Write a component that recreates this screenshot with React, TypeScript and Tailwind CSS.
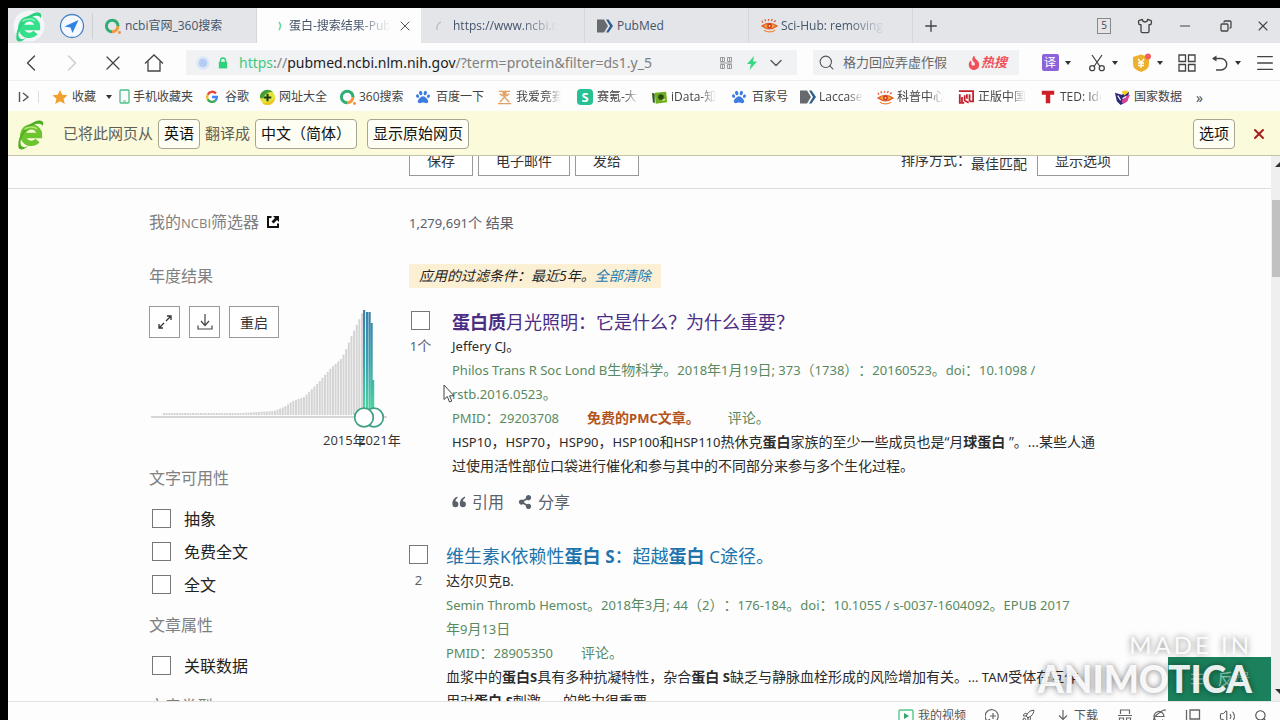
import type { ReactNode } from 'react';
import {
  ChevronDown,
  ChevronLeft,
  ChevronRight,
  Copy,
  Menu,
  Minus,
  Plus,
  Rocket,
  Search,
  Shirt,
  Volume2,
  X,
} from 'lucide-react';
import { FaFire, FaPaw, FaShareAlt } from 'react-icons/fa';

function BrowserLogo({ bright }: { bright?: boolean }) {
  const main = bright ? '#35e08c' : '#6cc42f';
  const dark = bright ? '#2bcf7d' : '#4fae22';
  return (
    <svg viewBox="0 0 32 32" className="size-8" aria-hidden="true">
      {bright && <circle cx="16" cy="16" r="15.500" fill="#f4f6f8" />}
      <path d="M8.500 17.500H24.500A8.300 8.300 0 1 0 22.500 22.500" fill="none" stroke={main} strokeWidth="5.400" />
      <path d="M3.500 29.500C2 20 9 8.500 19 4C26 1 30 3 27.500 8.500C27.500 5 23 5 18.500 7C10 11 5 20 5.500 25.500C6 29.500 10 30 13 28C9 32 4.500 32.500 3.500 29.500Z" fill={dark} />
      <path d="M9.500 11.500C12.500 8.500 19 8 22 11" fill="none" stroke={bright ? '#8af5bd' : '#b4ea78'} strokeWidth="1.600" />
    </svg>
  );
}

function SearchRing() {
  return (
    <svg viewBox="0 0 18 18" className="size-[18px]" aria-hidden="true">
      <path d="M14 9A5.800 5.800 0 1 0 8 14.800" fill="none" stroke="#2fae74" strokeWidth="3" />
      <path d="M8 14.800A5.800 5.800 0 0 0 14 9" fill="none" stroke="#f39a3c" strokeWidth="3" />
      <circle cx="15.500" cy="15.500" r="1.400" fill="#f08a3c" />
    </svg>
  );
}

function PubMedIcon() {
  return (
    <svg viewBox="0 0 18 18" className="size-[18px]" aria-hidden="true">
      <path d="M1 2.500H8L12 9L8 15.500H1Z" fill="#66696e" />
      <path d="M10 2.500H12.500L17 9L12.500 15.500H10L14 9Z" fill="#2e5f8f" />
    </svg>
  );
}

function EyeIcon() {
  return (
    <svg viewBox="0 0 18 18" className="size-[17px]" aria-hidden="true">
      <path d="M1 9.500Q9 4 17 9.500Q9 15.500 1 9.500Z" fill="#f2a13b" stroke="#dd5a2a" strokeWidth="1.200" />
      <circle cx="9" cy="9.600" r="2.600" fill="#cf3b22" />
      <circle cx="9" cy="9.600" r="1" fill="#ffe08a" />
      <path d="M2 6L1 4M5 4.500L4 2.500M8 4V2M11 4.200L12 2.200M14 5.500L15.500 3.500" stroke="#e05a30" strokeWidth="1.300" />
      <path d="M3 14Q9 17.500 15 14" fill="none" stroke="#e88a34" strokeWidth="1.400" />
    </svg>
  );
}

function GoogleIcon() {
  return (
    <svg viewBox="0 0 18 18" className="size-3.5" aria-hidden="true" fill="none" strokeWidth="3">
      <path d="M14 4.500A6.300 6.300 0 0 0 3.500 6" stroke="#e24a3b" />
      <path d="M3.500 6A6.300 6.300 0 0 0 3.500 12" stroke="#f4b92f" />
      <path d="M3.500 12A6.300 6.300 0 0 0 13.300 13.600" stroke="#3aa757" />
      <path d="M13.300 13.600A6.300 6.300 0 0 0 15.300 9H9" stroke="#4285f4" />
    </svg>
  );
}

function PlusBall() {
  return (
    <svg viewBox="0 0 18 18" className="size-[17px]" aria-hidden="true">
      <circle cx="9" cy="9" r="8" fill="#e3e53a" />
      <path d="M1 9A8 8 0 0 1 15 3.500Q9 2 6 7T1 9Z" fill="#3f9f35" />
      <path d="M3 14.500Q12 16 17 9Q16 17 9 17Q5 17 3 14.500Z" fill="#f0c321" />
      <path d="M9 5V13M5 9H13" stroke="#1c3b1a" strokeWidth="2.200" />
    </svg>
  );
}

function HourglassIcon() {
  return (
    <svg viewBox="0 0 18 18" className="size-[17px]" aria-hidden="true" fill="none" stroke="#e0a068" strokeWidth="1.500">
      <path d="M3 2.500H15M2 15.500H16M4 5Q9 10 14 5M4 14L9 8.500L14 14" />
      <circle cx="9" cy="4.500" r="1.600" fill="#e0a068" />
    </svg>
  );
}

function SkIcon() {
  return (
    <span className="flex size-4 items-center justify-center rounded-sm bg-[#25c193] text-[13px] font-bold leading-none text-white">
      S
    </span>
  );
}

function DataBookIcon() {
  return (
    <svg viewBox="0 0 18 18" className="size-[17px]" aria-hidden="true">
      <path d="M1 4L4 5V15L2 14Z" fill="#2d5c14" />
      <path d="M4 4L16 3L17 14L5 15.500Z" fill="#6fae1f" />
      <circle cx="10.500" cy="8.500" r="3" fill="#2b4a12" />
      <path d="M12 12L15 11" stroke="#d5ec9a" strokeWidth="1.500" />
    </svg>
  );
}

function SealIcon() {
  return (
    <svg viewBox="0 0 18 18" className="size-4" aria-hidden="true" fill="none" stroke="#c4202b" strokeWidth="2">
      <path d="M1 2.500H17V15M2 6V15.500H7M4.500 9V15M7.500 7V13L12 15.500M10 6V11M13 6V14M13 14H16" />
    </svg>
  );
}

function TedIcon() {
  return (
    <svg viewBox="0 0 18 18" className="size-4" aria-hidden="true">
      <path d="M2 2H16V6.500H11.500V16H6.500V6.500H2Z" fill="#cf2027" />
    </svg>
  );
}

function StatsIcon() {
  return (
    <svg viewBox="0 0 18 18" className="size-[17px]" aria-hidden="true">
      <path d="M1 4L8 6L16 3L14 13L7 17L3 13Z" fill="#2b2a78" />
      <path d="M8 3Q12 0 16 3L11 7Z" fill="#f2d024" />
      <path d="M8 14Q9 7 17 6L14 13Q10 17 8 14Z" fill="#d8409a" />
      <path d="M4 7L7 12M9 10L13 8" stroke="#fff" strokeWidth="1.200" />
    </svg>
  );
}

function PhoneIcon() {
  return (
    <svg viewBox="0 0 12 16" className="h-4 w-3" aria-hidden="true">
      <rect x="1" y="1" width="9" height="13" rx="1" fill="none" stroke="#4cbf86" strokeWidth="1.300" />
      <path d="M4 12H7" stroke="#4cbf86" />
    </svg>
  );
}

function StarIcon() {
  return (
    <svg viewBox="0 0 18 18" className="size-4" aria-hidden="true">
      <path d="M9 1L11.500 6.500L17.500 7L13 11L14.400 17L9 13.800L3.600 17L5 11L.5 7L6.500 6.500Z" fill="#efa12a" />
    </svg>
  );
}

function Caret() {
  return (
    <svg viewBox="0 0 6 4" className="h-1 w-1.5 shrink-0" aria-hidden="true">
      <path d="M0 0H6L3 4Z" fill="#333" />
    </svg>
  );
}

/** Sets Latin runs one step smaller than the Chinese text around them. */
function Mixed({ text, large }: { text: string; large?: boolean }) {
  return (
    <>
      {text.split(/([\x21-\x7e][\x20-\x7e]*)/).map((part, i) =>
        i % 2 ? (
          <span key={i} className={`font-['Noto_Sans',sans-serif] ${large ? 'text-[17px]' : 'text-[13px]'}`}>
            {part}
          </span>
        ) : (
          part
        ),
      )}
    </>
  );
}

const paw = <FaPaw className="size-3.5 text-[#3c7ce0]" />;

const bookmarks: { icon: ReactNode; text: string; width: string; fade?: boolean; caret?: boolean }[] = [
  { icon: <StarIcon />, text: '收藏', width: 'w-[67px]', caret: true },
  { icon: <PhoneIcon />, text: '手机收藏夹', width: 'w-[86px] pr-2' },
  { icon: <GoogleIcon />, text: '谷歌', width: 'w-[54px] pr-2' },
  { icon: <PlusBall />, text: '网址大全', width: 'w-[80px] pr-2' },
  { icon: <SearchRing />, text: '360搜索', width: 'w-[77px] pr-2' },
  { icon: paw, text: '百度一下', width: 'w-[80px] pr-2' },
  { icon: <HourglassIcon />, text: '我爱竞赛', width: 'w-[81px] pr-4', fade: true },
  { icon: <SkIcon />, text: '赛氪-大学', width: 'w-[74px] pr-3', fade: true },
  { icon: <DataBookIcon />, text: 'iData-知识', width: 'w-[81px] pr-4', fade: true },
  { icon: paw, text: '百家号', width: 'w-[67px] pr-2' },
  { icon: <PubMedIcon />, text: 'Laccase', width: 'w-[78px] pr-3', fade: true },
  { icon: <EyeIcon />, text: '科普中心', width: 'w-[81px] pr-3.5', fade: true },
  { icon: <SealIcon />, text: '正版中国', width: 'w-[82px] pr-3.5', fade: true },
  { icon: <TedIcon />, text: 'TED: Ideas', width: 'w-[74px] pr-3', fade: true },
  { icon: <StatsIcon />, text: '国家数据', width: 'w-[82px] pr-2' },
];

const FADE = '[mask-image:linear-gradient(to_right,#000_65%,transparent)]';

function Tab({ icon, text, active, fade }: { icon: ReactNode; text: string; active?: boolean; fade?: boolean }) {
  return (
    <div
      className={`flex w-[164px] shrink-0 items-center self-stretch pl-2.5 pr-2 ${active ? 'bg-[#fdfdfd]' : 'border-r border-[#d5d7db]'}`}
    >
      <span className="mr-0.5 flex w-5 shrink-0 items-center justify-center">{icon}</span>
      <a
        href="#tab"
        className={`overflow-hidden whitespace-nowrap text-[12px] text-[#44546a] ${active ? 'w-[102px]' : 'max-w-[104px]'} ${fade ? FADE : ''}`}
      >
        {text}
      </a>
      {active && (
        <button type="button" aria-label="关闭标签" className="ml-auto">
          <X className="size-4 text-[#555]" strokeWidth={1.5} />
        </button>
      )}
    </div>
  );
}

function IconButton({ label, width, children }: { label: string; width: string; children: ReactNode }) {
  return (
    <button type="button" aria-label={label} className={`flex shrink-0 items-center justify-center gap-1.5 text-[#444] ${width}`}>
      {children}
    </button>
  );
}

function TabBar() {
  return (
    <header className="flex h-[35px] shrink-0 items-center bg-[#e3e5e9]">
      <span className="flex w-[42px] justify-center">
        <BrowserLogo bright />
      </span>
      <span className="flex w-[43px] justify-end border-r border-[#cdd0d5] pr-[7px]">
        <svg viewBox="0 0 26 26" className="size-[26px]" aria-hidden="true">
          <circle cx="13" cy="13" r="11.500" fill="#f5f9fe" stroke="#4a84c8" strokeWidth="1.300" />
          <path d="M19.500 7L5.500 13.500L11.500 14.500L13.500 20Z" fill="#2d84e3" />
        </svg>
      </span>
      <Tab icon={<SearchRing />} text="ncbi官网_360搜索" />
      <Tab
        active
        fade
        icon={
          <svg viewBox="0 0 16 16" className="size-4" aria-hidden="true">
            <path d="M10 4Q13 8 10 12" fill="none" stroke="#5fdc9a" strokeWidth="1.500" />
          </svg>
        }
        text="蛋白-搜索结果-PubMed"
      />
      <Tab
        fade
        icon={
          <svg viewBox="0 0 16 16" className="size-4" aria-hidden="true">
            <path d="M4 12Q3 6 8 4" fill="none" stroke="#b9bcc2" strokeWidth="1.300" />
          </svg>
        }
        text="https://www.ncbi.nlm"
      />
      <Tab icon={<PubMedIcon />} text="PubMed" />
      <Tab fade icon={<EyeIcon />} text="Sci-Hub: removing barriers" />
      <IconButton label="新建标签" width="w-9">
        <Plus className="size-[18px]" strokeWidth={1.8} />
      </IconButton>
      <div className="ml-auto flex items-center">
        <IconButton label="标签数" width="w-[40px]">
          <span className="flex h-4 w-3.5 items-center justify-center border border-[#888] text-[10px]">5</span>
        </IconButton>
        <IconButton label="皮肤" width="w-[41px]">
          <Shirt className="size-4" strokeWidth={2} />
        </IconButton>
        <IconButton label="最小化" width="w-[40px]">
          <Minus className="size-4" strokeWidth={1.5} />
        </IconButton>
        <IconButton label="还原" width="w-[41px]">
          <Copy className="size-3 rotate-90" strokeWidth={2.6} />
        </IconButton>
        <IconButton label="关闭" width="w-[34px]">
          <X className="size-4" strokeWidth={1.6} />
        </IconButton>
      </div>
    </header>
  );
}

function Toolbar() {
  return (
    <nav className="flex h-[38px] shrink-0 items-center border-b border-[#efefef] bg-[#fdfdfd] pt-0.5">
      <div className="flex w-[178px] pl-[3px]">
        <IconButton label="后退" width="w-[40px]">
          <ChevronLeft className="size-7" strokeWidth={1.2} />
        </IconButton>
        <IconButton label="前进" width="w-[42px]">
          <ChevronRight className="size-7 text-[#ccc]" strokeWidth={1.2} />
        </IconButton>
        <IconButton label="停止" width="w-[40px]">
          <X className="size-6" strokeWidth={1.3} />
        </IconButton>
        <IconButton label="主页" width="w-[42px]">
          <svg viewBox="0 0 20 20" className="size-5" aria-hidden="true">
            <path d="M1 10.500L10 2L19 10.500M4 8.500V18H16V8.500" fill="none" stroke="currentColor" strokeWidth="1.300" />
          </svg>
        </IconButton>
      </div>
      <div className="flex h-[25px] flex-1 items-center bg-[#f0f2f3] pl-2.5">
        <svg viewBox="0 0 14 14" className="size-3.5" aria-hidden="true">
          <circle cx="7" cy="7" r="5.500" fill="#b4cdf3" stroke="#dbe6f8" strokeWidth="2.500" />
        </svg>
        <svg viewBox="0 0 12 14" className="ml-2 h-3 w-2.5" aria-hidden="true">
          <path d="M3 6V4A3 3 0 0 1 9 4V6" fill="none" stroke="#2fd17c" strokeWidth="1.600" />
          <rect x="1" y="5.500" width="10" height="8" fill="#2fd17c" />
        </svg>
        <p className="ml-[11px] whitespace-nowrap font-['Noto_Sans',sans-serif] text-[14px] text-[#808080]">
          <span className="text-[#3ecb84]">https</span>://<span className="text-[#1d1d1d]">pubmed.ncbi.nlm.nih.gov</span>
          /?term=protein&amp;filter=ds1.y_5
        </p>
        <div className="ml-auto flex items-center pr-[11px]">
          <svg viewBox="0 0 12 12" className="size-3" aria-hidden="true" fill="none" stroke="#999">
            <path d="M.5 .5H4.500V4.500H.5ZM7.500 .5H11.500V4.500H7.500ZM.5 7.500H4.500V11.500H.5ZM7.500 7.500H11.500V11.500H7.500ZM0 6H12M2.500 1V4M9.500 1V4M2.500 8V11M9.500 8V11" />
          </svg>
          <svg viewBox="0 0 12 14" className="ml-3.5 h-3.5 w-3" aria-hidden="true">
            <path d="M8 0L1 8H5L3.500 14L11 5.500H7Z" fill="#35d983" />
          </svg>
          <ChevronDown className="ml-2 size-5 text-[#555]" strokeWidth={1.6} />
        </div>
      </div>
      <label className="ml-4 flex h-[25px] w-[206px] items-center bg-[#f0f2f3] pl-[5px]">
        <Search className="size-[17px] shrink-0 text-[#555]" strokeWidth={1.5} />
        <input
          aria-label="搜索"
          className="ml-2 w-[114px] bg-transparent text-[13px] text-[#666] outline-none placeholder:text-[#666]"
          placeholder="格力回应弄虚作假"
        />
        <FaFire className="ml-2.5 size-3.5 shrink-0 text-[#f0505a]" />
        <span className="whitespace-nowrap text-[13px] font-bold italic text-[#f0505a]">热搜</span>
      </label>
      <div className="ml-3 flex items-center">
        <IconButton label="翻译" width="w-[50px]">
          <span className="flex size-[17px] items-center justify-center rounded-xs bg-[#8b62d8] text-[12px] leading-none text-white">译</span>
          <Caret />
        </IconButton>
        <IconButton label="截图" width="w-[43px]">
          <svg viewBox="0 0 18 18" className="size-[18px]" aria-hidden="true" fill="none" stroke="currentColor" strokeWidth="1.300">
            <path d="M4 1L12 12.500M14 1L6 12.500" />
            <circle cx="4.200" cy="14.200" r="2.500" />
            <circle cx="13.800" cy="14.200" r="2.500" />
          </svg>
          <Caret />
        </IconButton>
        <IconButton label="钱包" width="w-[46px]">
          <svg viewBox="0 0 20 20" className="size-5" aria-hidden="true">
            <path d="M10 1.500L18 4V11Q18 16.500 10 19Q2 16.500 2 11V4Z" fill="#eeb02c" />
            <path d="M7 6L10 9.500L13 6M10 9.500V15M7 10H13M7 12.500H13" fill="none" stroke="#fff" strokeWidth="1.300" />
            <circle cx="17" cy="3.500" r="3" fill="#f06060" />
          </svg>
          <Caret />
        </IconButton>
        <IconButton label="应用" width="w-[33px]">
          <svg viewBox="0 0 18 18" className="size-[18px]" aria-hidden="true" fill="none" stroke="currentColor" strokeWidth="1.300">
            <path d="M1 1H7.500V7.500H1ZM10.500 1H17V7.500H10.500ZM1 10.500H7.500V17H1ZM10.500 10.500H17V17H10.500Z" />
          </svg>
        </IconButton>
        <IconButton label="撤销" width="w-[46px]">
          <svg viewBox="0 0 18 18" className="size-[18px]" aria-hidden="true">
            <path d="M2 4.500H10A5.500 5.500 0 0 1 10 16H5" fill="none" stroke="currentColor" strokeWidth="1.400" />
            <path d="M1 4.500L5.500 1.500V7.500Z" fill="currentColor" />
          </svg>
          <Caret />
        </IconButton>
        <IconButton label="菜单" width="w-[31px]">
          <Menu className="size-[22px]" strokeWidth={1.4} />
        </IconButton>
      </div>
    </nav>
  );
}

function BookmarkBar() {
  return (
    <nav className="flex h-[30px] shrink-0 items-center overflow-hidden bg-[#fdfdfd] pl-2.5 pt-0.5 text-[12px] text-[#444]">
      <svg viewBox="0 0 12 12" className="size-3 shrink-0" aria-hidden="true">
        <path d="M1.500 1V11M5 2L10 6L5 10" fill="none" stroke="#555" strokeWidth="1.400" />
      </svg>
      <span className="ml-2 mr-[13px] h-3 w-px shrink-0 bg-[#ddd]" />
      {bookmarks.map((b) => (
        <div key={b.text} className={`flex shrink-0 items-center ${b.width}`}>
          <span className={`flex shrink-0 items-center ${b.text === '手机收藏夹' ? 'w-3.5' : 'w-5'}`}>{b.icon}</span>
          <a href="#bookmark" className={`overflow-hidden whitespace-nowrap ${b.fade ? FADE : ''}`}>
            {b.text}
          </a>
          {b.caret && (
            <span className="ml-2.5">
              <Caret />
            </span>
          )}
        </div>
      ))}
      <span className="text-[14px]">»</span>
    </nav>
  );
}

function BarButton({ children }: { children: ReactNode }) {
  return (
    <button type="button" className="h-[30px] rounded-sm border border-[#a5a592] bg-[#fefef4] px-[5px] text-[15px] leading-none text-[#111]">
      {children}
    </button>
  );
}

function TranslateBar() {
  return (
    <section className="flex h-[45px] shrink-0 items-center border-b border-[#c4c1a9] bg-[#fbfadb] pl-[7px] pt-px text-[15px] text-[#5f5f58]">
      <BrowserLogo />
      <span className="ml-4 mr-[5px]">已将此网页从</span>
      <BarButton>英语</BarButton>
      <span className="mx-[5px]">翻译成</span>
      <BarButton>中文（简体）</BarButton>
      <span className="w-2.5" />
      <BarButton>显示原始网页</BarButton>
      <span className="ml-auto flex items-center">
        <BarButton>选项</BarButton>
        <button type="button" aria-label="关闭翻译栏" className="ml-4 mr-[13px] text-[#a51d1d]">
          <X className="size-4" strokeWidth={3} />
        </button>
      </span>
    </section>
  );
}

const profile: [number, number][] = [
  [14, 107], [92, 107], [124, 105], [134, 101], [143, 95], [154, 91], [168, 77],
  [181, 62], [191, 53], [195, 46], [201, 31], [209, 14], [213, 5],
];

function topAt(x: number) {
  for (let i = 1; i < profile.length; i++) {
    const [x0, y0] = profile[i - 1];
    const [x1, y1] = profile[i];
    if (x <= x1) return y0 + ((y1 - y0) * (x - x0)) / (x1 - x0);
  }
  return 5;
}

const grayBars = Array.from({ length: 76 }, (_, i) => 14 + i * 2.64);
const selectedBars = [
  { x: 214, top: 4 },
  { x: 217, top: 6 },
  { x: 219.5, top: 6 },
  { x: 221.5, top: 17 },
  { x: 223, top: 74 },
];

function YearChart() {
  return (
    <svg viewBox="0 0 254 144" className="col-start-1 row-start-1 h-36 w-[254px]" role="img" aria-label="年度结果">
      <defs>
        <linearGradient id="yearFill" gradientUnits="userSpaceOnUse" x1="0" y1="4" x2="0" y2="110">
          <stop offset="0" stopColor="#3a80ad" />
          <stop offset="0.5" stopColor="#3aa3ae" />
          <stop offset="1" stopColor="#4ddba0" />
        </linearGradient>
      </defs>
      {grayBars.map((x) => (
        <rect key={x} x={x} y={topAt(x)} width="2" height={109 - topAt(x)} fill="#d4d4d4" />
      ))}
      {selectedBars.map((b) => (
        <rect key={b.x} x={b.x} y={b.top} width="2.200" height={109 - b.top} fill="url(#yearFill)" />
      ))}
      <rect x="2" y="110" width="236" height="2" fill="#d6d6d6" />
      <circle cx="225" cy="111.500" r="9.300" fill="#fff" stroke="#3f9f84" strokeWidth="1.700" />
      <circle cx="215" cy="111.500" r="9.300" fill="#fff" stroke="#3f9f84" strokeWidth="1.700" />
      <text x="174" y="139" fontSize="13" fill="#333">2015年</text>
      <text x="209" y="139" fontSize="13" fill="#333">2021年</text>
    </svg>
  );
}

const BOX = 'size-[19px] shrink-0 appearance-none border border-[#777] bg-white';

function FilterOption({ label }: { label: string }) {
  return (
    <label className="flex h-[33px] items-center gap-[13px] pl-[3px] text-[16px] text-[#222]">
      <input type="checkbox" className={BOX} />
      {label}
    </label>
  );
}

function SideTitle({ children, className }: { children: ReactNode; className: string }) {
  return <h2 className={`flex h-6 items-center gap-2 whitespace-nowrap text-[16px] text-[#808080] ${className}`}>{children}</h2>;
}

function Sidebar() {
  const square = 'flex h-8 items-center justify-center border border-[#999] bg-white text-[14px] text-[#333]';
  return (
    <aside className="w-[260px] shrink-0">
      <SideTitle className="mt-[21px]">
        <span>
          我的<span className="text-[13px]">NCBI</span>筛选器
        </span>
        <svg viewBox="0 0 12 12" className="size-3" aria-hidden="true">
          <path d="M4.500 1H1V11H11V7.500" fill="none" stroke="#111" strokeWidth="2" />
          <path d="M6 0H12V6L10 4L6.500 7.500L4.500 5.500L8 2Z" fill="#111" />
        </svg>
      </SideTitle>
      <SideTitle className="mt-[30px]">年度结果</SideTitle>
      <div className="mt-[18px] grid">
        <YearChart />
        <div className="col-start-1 row-start-1 flex gap-[9px]">
          <button type="button" aria-label="展开" className={`${square} w-[31px]`}>
            <svg viewBox="0 0 16 16" className="size-4" aria-hidden="true">
              <path d="M9 7L14 2M10 2H14V6M7 9L2 14M6 14H2V10" fill="none" stroke="#333" strokeWidth="1.300" />
            </svg>
          </button>
          <button type="button" aria-label="下载" className={`${square} w-[31px]`}>
            <svg viewBox="0 0 16 16" className="size-4" aria-hidden="true">
              <path d="M8 0V11M4 7L8 11.500L12 7M1 11.500V15H15V11.500" fill="none" stroke="#444" strokeWidth="1.200" />
            </svg>
          </button>
          <button type="button" className={`${square} w-[50px]`}>重启</button>
        </div>
      </div>
      <SideTitle className="mt-[16px]">文字可用性</SideTitle>
      <div className="mt-3">
        <FilterOption label="抽象" />
        <FilterOption label="免费全文" />
        <FilterOption label="全文" />
      </div>
      <SideTitle className="mt-3">文章属性</SideTitle>
      <div className="mt-3">
        <FilterOption label="关联数据" />
      </div>
      <SideTitle className="mt-3">文章类型</SideTitle>
    </aside>
  );
}

function Result({ rank, gutter, children }: { rank: string; gutter: string; children: ReactNode }) {
  return (
    <article className="flex text-[14px] leading-6 text-[#2b2b2b]">
      <div className={`shrink-0 ${gutter}`}>
        <label className="flex w-[19px] flex-col items-center pt-px text-[#5b616b]">
          <input type="checkbox" className={BOX} />
          <span className="mt-1 whitespace-nowrap">
            <Mixed text={rank} />
          </span>
        </label>
      </div>
      <div className="min-w-0">{children}</div>
    </article>
  );
}

function HeaderButton({ width, children }: { width: string; children: ReactNode }) {
  return (
    <button type="button" className={`h-[30px] shrink-0 border border-[#999] bg-white text-[14px] leading-none text-[#333] ${width}`}>
      {children}
    </button>
  );
}

function Page() {
  return (
    <main className="min-w-0 flex-1 overflow-hidden bg-[#fdfdfd]">
      <div className="flex h-[33px] items-end overflow-hidden border-b border-[#dcdcdc] pb-3 pl-[401px]">
        <div className="flex gap-[5px]">
          <HeaderButton width="w-16">保存</HeaderButton>
          <HeaderButton width="w-[92px]">电子邮件</HeaderButton>
          <HeaderButton width="w-16">发给</HeaderButton>
        </div>
        <div className="ml-auto mr-[142px] flex items-end text-[14px] text-[#333]">
          <label htmlFor="sort" className="mb-1 leading-6">排序方式：</label>
          <select id="sort" className="h-6 w-[66px] appearance-none bg-transparent leading-6">
            <option>最佳匹配</option>
          </select>
          <HeaderButton width="w-[92px]">显示选项</HeaderButton>
        </div>
      </div>
      <div className="flex pl-[141px]">
        <Sidebar />
        <section className="min-w-0 flex-1 whitespace-nowrap">
          <p className="mt-[22px] text-[14px] leading-6 text-[#5b616b]">
            <Mixed text="1,279,691个 结果" />
          </p>
          <p className="mt-[29px] inline-block bg-[#fcf0d4] px-2.5 text-[14px] italic leading-6 text-[#222]">
            应用的过滤条件：最近5年。
            <a href="#clear" className="text-[#2378b0]">全部清除</a>
          </p>
          <div className="mt-[22px] flex flex-col gap-[30px]">
            <Result rank="1个" gutter="w-[43px] pl-0.5">
              <h3 className="text-[18px] leading-6 text-[#4b2e83]">
                <a href="#article1"><b>蛋白质</b>月光照明：它是什么？为什么重要？</a>
              </h3>
              <p><Mixed text="Jeffery CJ。" /></p>
              <p className="text-[#598a5f]">
                <Mixed text="Philos Trans R Soc Lond B生物科学。2018年1月19日; 373（1738）：20160523。doi：10.1098 /" />
                <br />
                <Mixed text="rstb.2016.0523。" />
              </p>
              <p className="flex gap-7 text-[#598a5f]">
                <span><Mixed text="PMID：29203708" /></span>
                <b className="text-[#b3541c]"><Mixed text="免费的PMC文章。" /></b>
                <span>评论。</span>
              </p>
              <p>
                <Mixed text="HSP10，HSP70，HSP90，HSP100和HSP110热休克" />
                <b>蛋白</b>家族的至少一些成员也是“月<b>球蛋白</b> ”。...某些人通
                <br />
                过使用活性部位口袋进行催化和参与其中的不同部分来参与多个生化过程。
              </p>
              <div className="mt-3 flex gap-3.5 text-[16px] text-[#5b616b]">
                <button type="button" className="flex items-center gap-1.5">
                  <svg viewBox="0 0 14 14" className="size-3.5" aria-hidden="true" fill="currentColor">
                    <path d="M5.500 1.500V3Q3.500 4 3.400 6.200A3 3 0 1 1 .4 9.200Q0 3.500 5.500 1.500ZM13 1.500V3Q11 4 10.900 6.200A3 3 0 1 1 7.900 9.200Q7.500 3.500 13 1.500Z" />
                  </svg>
                  引用
                </button>
                <button type="button" className="flex items-center gap-1.5">
                  <FaShareAlt className="size-3.5" />
                  分享
                </button>
              </div>
            </Result>
            <Result rank="2" gutter="w-[37px]">
              <h3 className="text-[18px] leading-6 text-[#2174ab]">
                <a href="#article2">
                  <Mixed large text="维生素K依赖性" />
                  <b><Mixed large text="蛋白 S" /></b>：超越<b>蛋白</b> <Mixed large text="C途径。" />
                </a>
              </h3>
              <p><Mixed text="达尔贝克B." /></p>
              <p className="text-[#598a5f]">
                <Mixed text="Semin Thromb Hemost。2018年3月; 44（2）：176-184。doi：10.1055 / s-0037-1604092。EPUB 2017" />
                <br />
                <Mixed text="年9月13日" />
              </p>
              <p className="flex gap-7 text-[#598a5f]">
                <span><Mixed text="PMID：28905350" /></span>
                <span>评论。</span>
              </p>
              <p>
                血浆中的<b><Mixed text="蛋白S" /></b>具有多种抗凝特性，杂合<b><Mixed text="蛋白 S" /></b>
                <Mixed text="缺乏与静脉血栓形成的风险增加有关。... TAM受体在互作" />
                <br />
                用对<b><Mixed text="蛋白 S" /></b>刺激......的能力很重要
              </p>
            </Result>
          </div>
        </section>
      </div>
    </main>
  );
}

function Scrollbar() {
  return (
    <div className="flex w-[9px] shrink-0 flex-col items-end bg-[#efefef]" aria-hidden="true">
      <svg viewBox="0 0 5 6" className="mt-1.5 h-1.5 w-[5px]">
        <path d="M0 5L5 0V5Z" fill="#333" />
      </svg>
      <div className="mt-8 h-[77px] w-2 bg-[#c1c1c1]" />
      <svg viewBox="0 0 5 6" className="mb-1.5 mt-auto h-1.5 w-[5px]">
        <path d="M0 0H5V5Z" fill="#333" />
      </svg>
    </div>
  );
}

function StatusBar() {
  return (
    <footer className="h-[19px] shrink-0 overflow-hidden border-t border-[#e2e2e2] bg-[#fdfdfd] text-[12px] text-[#555]">
      <div className="flex h-7 items-center justify-end pr-0.5">
        <button type="button" className="mr-[10px] flex items-center gap-1">
          <svg viewBox="0 0 16 14" className="h-3.5 w-4" aria-hidden="true">
            <rect x="1" y="1" width="14" height="12" rx="1" fill="none" stroke="#54c98b" strokeWidth="1.400" />
            <path d="M6 4L11 7L6 10Z" fill="#2fa868" />
          </svg>
          我的视频
        </button>
        <IconButton label="加速" width="w-[35px]">
          <svg viewBox="0 0 16 16" className="size-4" aria-hidden="true" fill="none" stroke="#666" strokeWidth="1.200">
            <path d="M3 13.500A6.500 6.500 0 1 1 8 14.500M5 8H11M8 5V11M1 14L5 11" />
          </svg>
        </IconButton>
        <IconButton label="火箭" width="w-[35px]">
          <Rocket className="size-3.5" strokeWidth={1.6} />
        </IconButton>
        <button type="button" className="mx-2.5 flex items-center gap-1">
          <svg viewBox="0 0 14 14" className="size-3.5" aria-hidden="true">
            <path d="M7 1V10M3 6.500L7 10.500L11 6.500M1 13H13" fill="none" stroke="#666" strokeWidth="1.200" />
          </svg>
          下载
        </button>
        <IconButton label="无痕" width="w-[34px]">
          <svg viewBox="0 0 16 16" className="size-4" aria-hidden="true" fill="none" stroke="#666" strokeWidth="1.200">
            <path d="M3.500 6V2H12.500V6M1 7.500H15M2.500 10H6.500V14H2.500ZM9.500 10H13.500V14H9.500Z" />
          </svg>
        </IconButton>
        <IconButton label="内核" width="w-[34px]">
          <svg viewBox="0 0 16 16" className="size-4" aria-hidden="true" fill="none" stroke="#666" strokeWidth="1.200">
            <path d="M4 8.500H13A5 5 0 1 0 12 11.500M3 14Q1 10 8 5T14 3" />
          </svg>
        </IconButton>
        <IconButton label="分屏" width="w-[34px]">
          <svg viewBox="0 0 16 16" className="size-4" aria-hidden="true" fill="none" stroke="#666" strokeWidth="1.300">
            <path d="M5 2H14.500V11H5ZM1.500 2V14H10" />
          </svg>
        </IconButton>
        <IconButton label="声音" width="w-[34px]">
          <Volume2 className="size-[17px]" strokeWidth={1.4} />
        </IconButton>
        <IconButton label="查找" width="w-[34px]">
          <Search className="size-3.5" strokeWidth={1.8} />
        </IconButton>
      </div>
    </footer>
  );
}

export default function App() {
  return (
    <div className="relative flex h-screen flex-col overflow-hidden bg-black pl-2 pt-2 font-['Open_Sans','Noto_Sans_CJK_SC',sans-serif] [text-spacing-trim:space-all]">
      <TabBar />
      <Toolbar />
      <BookmarkBar />
      <TranslateBar />
      <div className="relative flex min-h-0 flex-1">
        <Page />
        <Scrollbar />
        <svg viewBox="0 0 12 19" className="absolute left-[435px] top-[228px] h-[19px] w-3" aria-hidden="true">
          <path d="M1 1V15.500L4.300 12.500L6.500 18L8.800 17L6.500 11.800H11Z" fill="#fff" stroke="#444" />
        </svg>
        <button
          type="button"
          className="absolute bottom-0 right-[9px] flex h-11 w-[103px] items-center justify-center gap-3 bg-[#1b805c] text-[16px] text-[#8fc5b0]"
        >
          <Menu className="size-4" />
          反馈
        </button>
      </div>
      <StatusBar />
      <div className="pointer-events-none absolute bottom-[22px] right-7 flex flex-col items-end font-['Lato',sans-serif] text-white/90 [text-shadow:0_0_6px_rgba(0,0,0,0.5)]">
        <span className="text-[24px] leading-[30px] tracking-[3px]">MADE IN</span>
        <span className="text-[37px] font-black leading-[38px]">ANIMOTICA</span>
      </div>
    </div>
  );
}
